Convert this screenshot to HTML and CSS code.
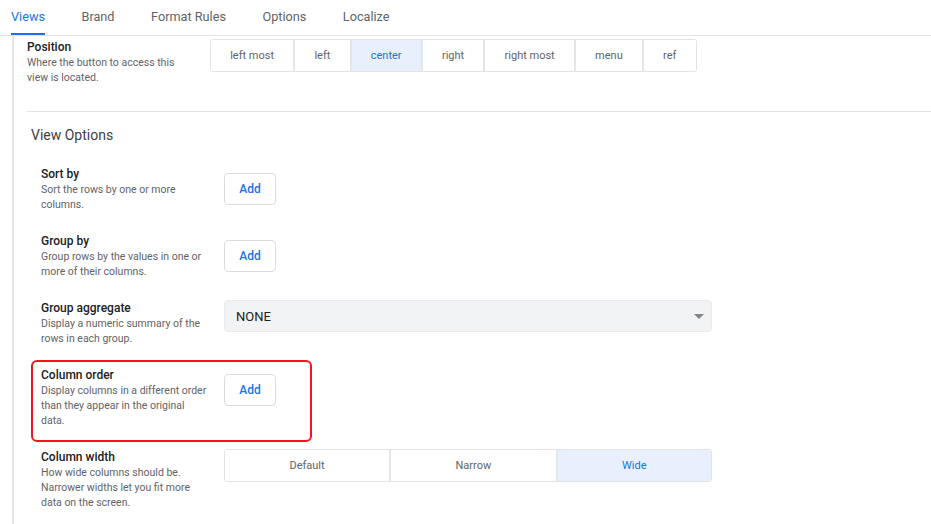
FILE: index.html
```html
<!DOCTYPE html>
<html>
<head>
<meta charset="utf-8">
<link rel="stylesheet" href="styles.css">
</head>
<body>
<nav class="tabs">
  <span class="tab active">Views</span>
  <span class="tab">Brand</span>
  <span class="tab">Format Rules</span>
  <span class="tab">Options</span>
  <span class="tab">Localize</span>
</nav>
<main class="panel">
  <section class="position">
    <div class="label">
      <div class="title">Position</div>
      <div class="desc">Where the button to access this view is located.</div>
    </div>
    <div class="seg pos-seg">
      <span class="seg-item">left most</span>
      <span class="seg-item">left</span>
      <span class="seg-item on">center</span>
      <span class="seg-item">right</span>
      <span class="seg-item">right most</span>
      <span class="seg-item">menu</span>
      <span class="seg-item">ref</span>
    </div>
  </section>
  <section class="options">
    <h2 class="heading">View Options</h2>
    <div class="rows">
      <div class="row">
        <div class="label">
          <div class="title">Sort by</div>
          <div class="desc">Sort the rows by one or more columns.</div>
        </div>
        <button class="add">Add</button>
      </div>
      <div class="row">
        <div class="label">
          <div class="title">Group by</div>
          <div class="desc">Group rows by the values in one or more of their columns.</div>
        </div>
        <button class="add">Add</button>
      </div>
      <div class="row">
        <div class="label">
          <div class="title">Group aggregate</div>
          <div class="desc">Display a numeric summary of the rows in each group.</div>
        </div>
        <div class="select">
          <span>NONE</span>
          <svg class="caret" width="10" height="5" viewBox="0 0 10 5"><path d="M0 0h10L5 5z" fill="#80868b"/></svg>
        </div>
      </div>
      <div class="row marked">
        <div class="label">
          <div class="title">Column order</div>
          <div class="desc">Display columns in a different order than they appear in the original data.</div>
        </div>
        <button class="add">Add</button>
      </div>
      <div class="row">
        <div class="label">
          <div class="title">Column width</div>
          <div class="desc">How wide columns should be. Narrower widths let you fit more data on the screen.</div>
        </div>
        <div class="seg wide-seg">
          <span class="seg-item">Default</span>
          <span class="seg-item">Narrow</span>
          <span class="seg-item on">Wide</span>
        </div>
      </div>
    </div>
  </section>
</main>
</body>
</html>
```
FILE: styles.css
```css
* { box-sizing: border-box; }
html, body { margin: 0; padding: 0; background: #fff; }
body {
  font-family: Roboto, "Liberation Sans", Arial, sans-serif;
  color: #202124;
  width: 931px;
  height: 524px;
  overflow: hidden;
}
.tabs {
  display: flex;
  gap: 36.5px;
  height: 36px;
  padding-left: 11px;
  border-bottom: 1px solid #e3e3e3;
}
.tab {
  height: 35px;
  line-height: 33px;
  font-size: 12.7px;
  color: #5f6368;
  border-bottom: 2px solid transparent;
}
.tab.active {
  color: #1a73e8;
  border-bottom-color: #1a73e8;
}
.panel {
  margin-left: 12px;
  border-left: 2px solid #e6e6e6;
  padding-left: 13px;
  min-height: 488px;
}
.position {
  display: flex;
  align-items: flex-start;
  padding-top: 3px;
  padding-bottom: 26px;
  border-bottom: 1px solid #e3e3e3;
}
.position .title { margin-top: 1px; line-height: 15px; }
.label {
  width: 167px;
  margin-right: 16px;
  flex: none;
}
.title {
  font-size: 12px;
  font-weight: 500;
  line-height: 16px;
  color: #202124;
}
.desc {
  font-size: 10.5px;
  line-height: 15px;
  color: #5f6368;
}
.seg {
  display: flex;
  height: 33px;
  border: 1px solid #e3e3e5;
  border-radius: 3px;
  overflow: hidden;
}
.seg-item {
  display: flex;
  align-items: center;
  justify-content: center;
  padding: 0 19.2px;
  font-size: 11px;
  color: #5f6368;
  background: #fff;
}
.seg-item + .seg-item { border-left: 2px solid #e6e6e8; }
.seg-item.on {
  background: #e8f0fe;
  color: #1a73e8;
}
.wide-seg { width: 488px; }
.wide-seg .seg-item { flex: 1 1 auto; }
.options { padding-left: 4px; }
.heading {
  margin: 13px 0 21px;
  font-size: 14px;
  font-weight: 400;
  line-height: 20px;
  color: #3c4043;
}
.rows {
  display: flex;
  flex-direction: column;
  gap: 21px;
  padding-left: 10px;
}
.row {
  display: flex;
  align-items: flex-start;
}
.add {
  margin-top: 7px;
  width: 52px;
  height: 32px;
  border: 1px solid #dadce0;
  border-radius: 4px;
  background: #fff;
  color: #1a73e8;
  font-family: Roboto, "Liberation Sans", Arial, sans-serif;
  font-size: 12px;
  font-weight: 500;
  padding: 0;
}
.select {
  display: flex;
  align-items: center;
  justify-content: space-between;
  width: 488px;
  height: 32px;
  padding: 0 7px 0 11px;
  background: #f1f3f4;
  border: 1px solid #e8eaed;
  border-radius: 4px;
  font-size: 13px;
  color: #202124;
}
.caret { margin-top: 1px; }
.marked { position: relative; }
.marked::before {
  content: "";
  position: absolute;
  left: -10px;
  top: -7px;
  width: 277px;
  height: 78px;
  border: 2px solid #f0151f;
  border-radius: 6px;
  pointer-events: none;
}
```
